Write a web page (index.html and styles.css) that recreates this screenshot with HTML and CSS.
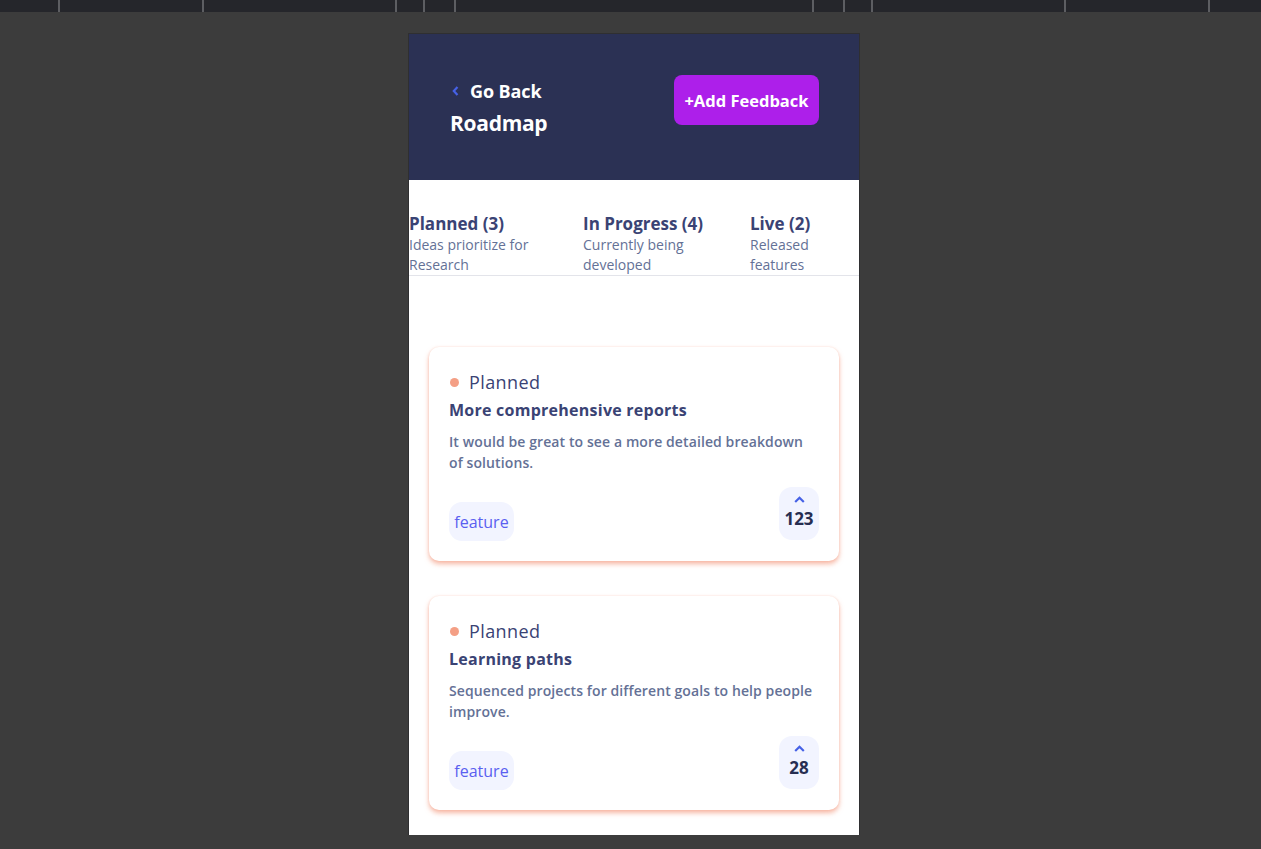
FILE: index.html
```html
<!DOCTYPE html>
<html lang="en">
<head>
<meta charset="utf-8">
<title>Roadmap</title>
<link rel="stylesheet" href="styles.css">
</head>
<body>
<div class="ruler">
  <span class="seg w59"></span><span class="seg w144"></span><span class="seg w193"></span><span class="seg w28"></span><span class="seg w31"></span><span class="seg w358"></span><span class="seg w31"></span><span class="seg w28"></span><span class="seg w193"></span><span class="seg w144"></span><span class="seg last"></span>
</div>
<div class="stage">
  <main class="phone">
    <header class="top">
      <div class="top-left">
        <a class="back" href="#">
          <svg class="back-icon" width="7" height="10" viewBox="0 0 7 10"><path d="M5.5 1 L1.8 5 L5.5 9" fill="none" stroke="#4661e6" stroke-width="2.2"/></svg>
          <span>Go Back</span>
        </a>
        <h1 class="title">Roadmap</h1>
      </div>
      <button class="add-btn">+Add Feedback</button>
    </header>

    <nav class="tabs">
      <div class="tab">
        <div class="tab-title">Planned (3)</div>
        <div class="tab-desc">Ideas prioritize for Research</div>
      </div>
      <div class="tab">
        <div class="tab-title">In Progress (4)</div>
        <div class="tab-desc">Currently being developed</div>
      </div>
      <div class="tab">
        <div class="tab-title">Live (2)</div>
        <div class="tab-desc">Released features</div>
      </div>
    </nav>

    <section class="list">
      <article class="card">
        <div class="status"><span class="dot"></span>Planned</div>
        <h2 class="card-title">More comprehensive reports</h2>
        <p class="card-desc">It would be great to see a more detailed breakdown of solutions.</p>
        <div class="card-foot">
          <span class="tag">feature</span>
          <div class="vote">
            <svg width="11" height="7" viewBox="0 0 11 7"><path d="M1.2 6 L5.5 1.8 L9.8 6" fill="none" stroke="#4661e6" stroke-width="2.2"/></svg>
            <span class="vote-count">123</span>
          </div>
        </div>
      </article>

      <article class="card">
        <div class="status"><span class="dot"></span>Planned</div>
        <h2 class="card-title">Learning paths</h2>
        <p class="card-desc">Sequenced projects for different goals to help people improve.</p>
        <div class="card-foot">
          <span class="tag">feature</span>
          <div class="vote">
            <svg width="11" height="7" viewBox="0 0 11 7"><path d="M1.2 6 L5.5 1.8 L9.8 6" fill="none" stroke="#4661e6" stroke-width="2.2"/></svg>
            <span class="vote-count">28</span>
          </div>
        </div>
      </article>
    </section>
  </main>
</div>
</body>
</html>
```

FILE: styles.css
```css
* { box-sizing: border-box; }

html, body {
  margin: 0;
  padding: 0;
  background: #3c3c3c;
  font-family: "Open Sans", "Noto Sans", sans-serif;
}

.ruler {
  display: flex;
  height: 12px;
  background: #25262b;
}
.seg {
  height: 12px;
  border-right: 2px solid #5d5e62;
  flex: none;
}
.w59 { width: 60px; }
.w144 { width: 144px; }
.w193 { width: 193px; }
.w28 { width: 28px; }
.w31 { width: 31px; }
.w358 { width: 358px; }
.seg.last { flex: 1; border-right: none; }

.stage {
  display: flex;
  justify-content: center;
  padding-left: 7px;
  padding-top: 22px;
}

.phone {
  width: 450px;
  background: #ffffff;
  outline: 1px solid #2f2f31;
}

/* header */
.top {
  height: 146px;
  background: #2b3154;
  display: flex;
  justify-content: space-between;
  align-items: flex-start;
  padding: 41px 40px 0 41px;
}
.top-left {
  display: flex;
  flex-direction: column;
  padding-top: 4px;
}
.back {
  display: flex;
  align-items: center;
  gap: 11px;
  color: #ffffff;
  text-decoration: none;
  font-weight: 700;
  font-size: 18px;
  line-height: 24px;
  letter-spacing: -0.1px;
  padding-left: 2px;
}
.back-icon { flex: none; }
.title {
  margin: 5px 0 0;
  color: #ffffff;
  font-size: 21px;
  line-height: 30px;
  font-weight: 700;
  letter-spacing: -0.3px;
}
.add-btn {
  width: 145px;
  height: 50px;
  border: none;
  border-radius: 8px;
  background: #ad1fea;
  color: #ffffff;
  font-family: inherit;
  font-weight: 700;
  font-size: 16.5px;
  letter-spacing: 0;
  padding: 0;
}

/* tabs */
.tabs {
  display: grid;
  grid-template-columns: 174px 167px 100px;
  padding-top: 32px;
  border-bottom: 1px solid #e3e4ea;
}
.tab-title {
  font-size: 17px;
  font-weight: 700;
  line-height: 23px;
  color: #3a4374;
}
.tab-desc {
  font-size: 14px;
  line-height: 20px;
  color: #647196;
  max-width: 145px;
}
.tab:nth-child(2) .tab-desc { max-width: 125px; }
.tab:nth-child(3) .tab-desc { max-width: 80px; }

/* cards */
.list {
  display: flex;
  flex-direction: column;
  gap: 35px;
  padding: 71px 20px 25px;
}
.card {
  background: #ffffff;
  border-radius: 10px;
  padding: 23px 20px 21px;
  box-shadow: 0 3px 5px rgba(244, 159, 133, 0.75), 0 0 2px rgba(244, 159, 133, 0.3);
  display: flex;
  flex-direction: column;
}
.status {
  display: flex;
  align-items: center;
  gap: 10px;
  font-size: 18px;
  line-height: 24px;
  color: #3a4374;
  letter-spacing: 0.4px;
}
.dot {
  width: 9px;
  height: 9px;
  border-radius: 50%;
  background: #f49f85;
  flex: none;
  margin-left: 1px;
}
.card-title {
  margin: 5px 0 0;
  font-size: 16px;
  line-height: 22px;
  font-weight: 700;
  color: #3a4374;
  letter-spacing: 0.25px;
}
.card-desc {
  margin: 10px 0 0;
  font-size: 14px;
  line-height: 21px;
  font-weight: 600;
  color: #647196;
  letter-spacing: 0.1px;
}
.card-foot {
  margin-top: 14px;
  display: flex;
  justify-content: space-between;
  align-items: flex-end;
}
.tag {
  display: inline-flex;
  align-items: center;
  justify-content: center;
  width: 65px;
  height: 39px;
  border-radius: 13px;
  background: #f2f4ff;
  color: #5a5ff0;
  font-size: 16px;
  margin-bottom: -1px;
}
.vote {
  width: 40px;
  height: 53px;
  border-radius: 13px;
  background: #f2f4ff;
  display: flex;
  flex-direction: column;
  align-items: center;
  padding-top: 9px;
}
.vote-count {
  font-size: 17px;
  line-height: 24px;
  font-weight: 700;
  color: #272e52;
  margin-top: 4px;
}
```
